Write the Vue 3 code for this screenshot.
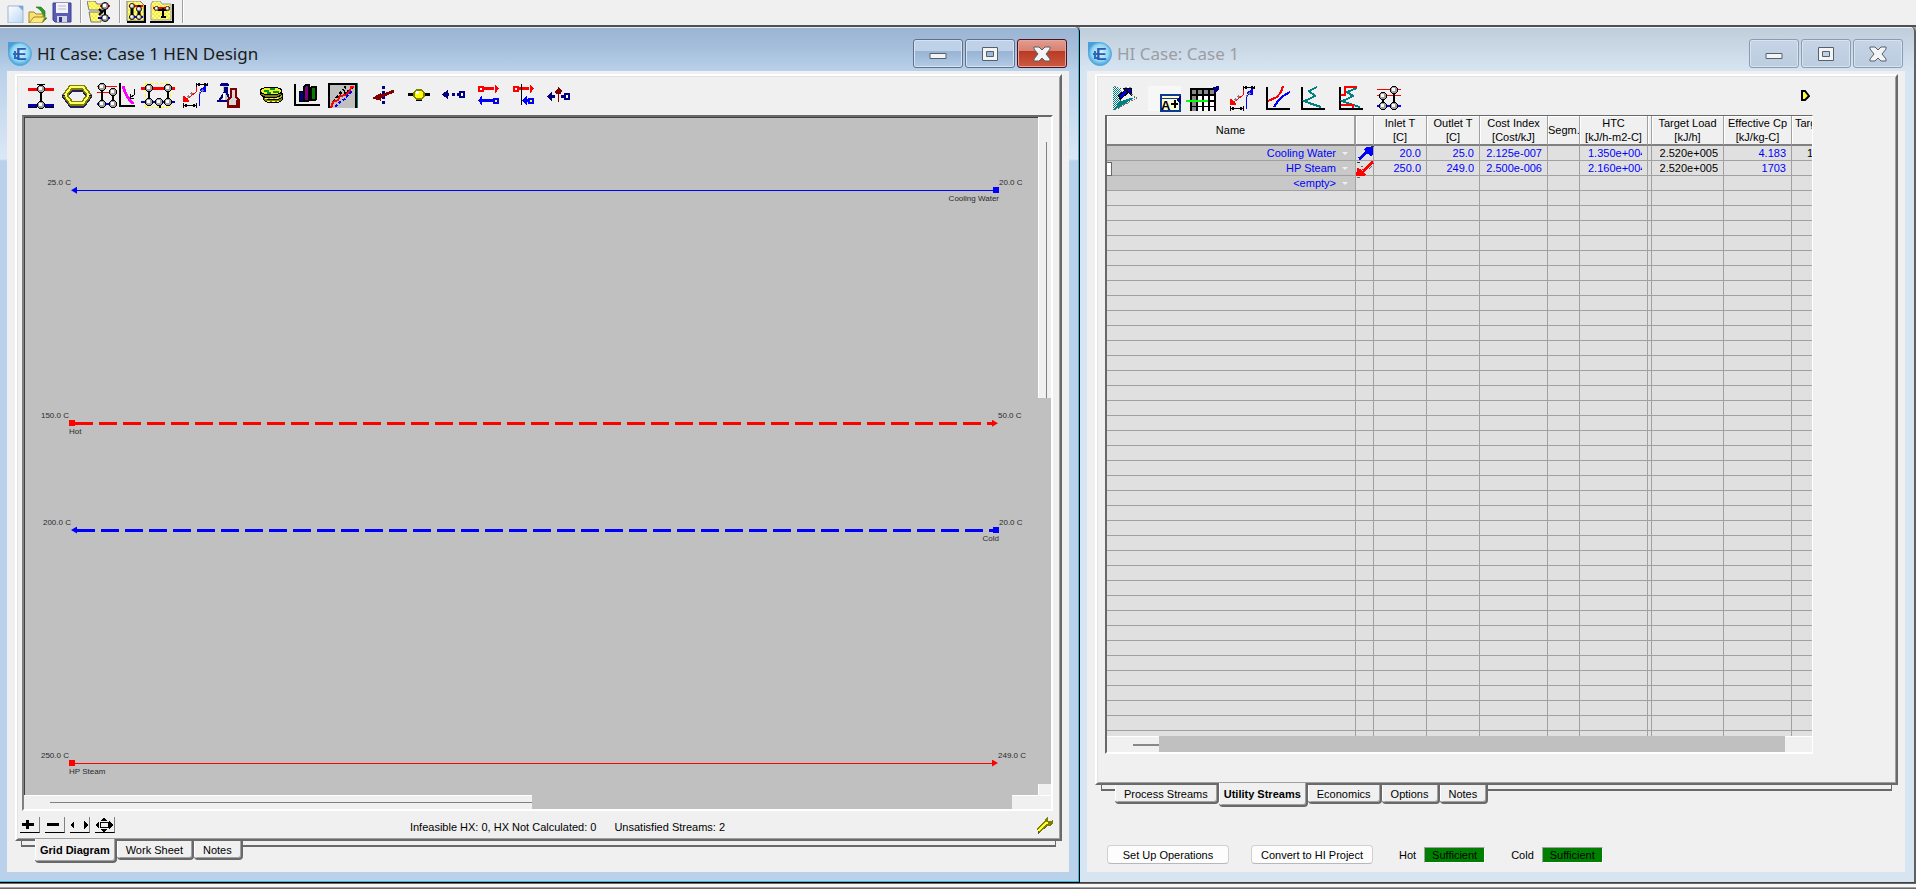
<template>
  <div class="workspace">
    <svg class="sprite" aria-hidden="true">
      <defs>
        <radialGradient id="logoFill" cx="50%" cy="45%" r="60%">
          <stop offset="0" stop-color="#e4f7ff" />
          <stop offset="0.6" stop-color="#8fd4f5" />
          <stop offset="1" stop-color="#2f8fd0" />
        </radialGradient>
        <linearGradient id="pageFill" x1="0" y1="0" x2="1" y2="1">
          <stop offset="0" stop-color="#ffffff" />
          <stop offset="1" stop-color="#b9d6f5" />
        </linearGradient>
        <pattern id="yellowDither" width="4" height="4" patternUnits="userSpaceOnUse">
          <path d="M0 0h4v4H0z" fill="#f8f020" />
          <path d="M0 0h2v2H0zM2 2h2v2H2z" fill="#fbf9a8" />
        </pattern>
        <pattern id="tealDither" width="2" height="2" patternUnits="userSpaceOnUse">
          <path d="M0 0h2v2H0z" fill="#008080" />
          <path d="M0 0h1v1H0zM1 1h1v1H1z" fill="#fff" />
        </pattern>
      </defs>

      <symbol id="ball" viewBox="0 0 8 8">
        <circle cx="4" cy="4" r="3.5" fill="#a0a0a0" stroke="#000" />
        <rect x="2" y="2" width="3" height="3" fill="#fff" />
      </symbol>
      <symbol id="logo" viewBox="0 0 24 24">
        <path d="M0 0h12v12H0z" fill="#4a9fd8" />
        <circle cx="12" cy="12" r="11.5" fill="url(#logoFill)" stroke="#58abdc" />
        <path d="M5 12h6M7 9v7h3" stroke="#2b6cc0" stroke-width="2" fill="none" />
      </symbol>

      <symbol id="new" viewBox="0 0 17 18">
        <path d="M1 1h15v17H1z" fill="url(#pageFill)" stroke="#9fb4cf" />
        <path d="M11 1l5 5v-5z" fill="#7ba6dc" />
      </symbol>
      <symbol id="open" viewBox="0 0 20 18">
        <path d="M8 2h5l4 4v7h2l-4 4-3-5h2V7l-3-3z" fill="#2c9a2c" stroke="#187018" stroke-width=".6" />
        <path d="M1 18V7h5l2 2h7v3" fill="#f4e27a" stroke="#a58718" />
        <path d="M1 18l5-6h11l-3 6z" fill="#ffe87c" stroke="#a58718" />
      </symbol>
      <symbol id="save" viewBox="0 0 20 21">
        <path d="M1 1h18v19H3l-2-2z" fill="#5a5cb4" stroke="#3c3f8c" />
        <path d="M4 1h12v10H4z" fill="#f3f3fb" />
        <path d="M6 4h8M6 7h8" stroke="#b8b8cc" />
        <path d="M5 14h10v6H5z" fill="#d5d5ea" />
        <path d="M7 15h3v5H7z" fill="#34367c" />
      </symbol>
      <symbol id="tree" viewBox="0 0 24 22">
        <path d="M0 0h8l2 3h5v6H2zM2 11h12v10H4z" fill="url(#yellowDither)" stroke="#777" />
        <path d="M13 5h10" stroke="#f00" stroke-width="2" />
        <path d="M11 17h12" stroke="#00f" stroke-width="2" />
        <path d="M18 4v14M12 14l5-5M12 8l4 4" stroke="#000" stroke-width="2" />
        <use href="#ball" x="14" y="1" width="8" height="8" />
        <use href="#ball" x="14" y="13" width="8" height="8" />
      </symbol>
      <symbol id="sheet" viewBox="0 0 20 22">
        <path d="M1 0h13l4 4v16H1z" fill="url(#yellowDither)" stroke="#777" />
        <path d="M3 5h14" stroke="#f00" stroke-width="2" />
        <path d="M3 16h14" stroke="#00f" stroke-width="2" />
        <path d="M6 4v13M13 4v13" stroke="#000" stroke-width="3" />
        <use href="#ball" x="3" y="2" width="6" height="6" />
        <use href="#ball" x="10" y="5" width="6" height="6" />
        <use href="#ball" x="3" y="13" width="6" height="6" />
        <use href="#ball" x="10" y="13" width="6" height="6" />
        <path d="M1 21h18V4" fill="none" stroke="#000" stroke-width="2" />
      </symbol>
      <symbol id="folder" viewBox="0 0 24 22">
        <path d="M1 3l2-3h7l2 3h9v16H1z" fill="url(#yellowDither)" stroke="#999" />
        <path d="M3 7h17" stroke="#f00" stroke-width="2" />
        <path d="M13 7v9M11 16h5M8 9h9" stroke="#000" stroke-width="2" />
        <use href="#ball" x="4" y="5" width="5" height="5" />
        <use href="#ball" x="15" y="5" width="5" height="5" />
        <path d="M0 21h23V3" fill="none" stroke="#000" stroke-width="2" />
      </symbol>

      <symbol id="exchanger" viewBox="0 0 26 26">
        <path d="M0 6h26" stroke="#f00" stroke-width="3" />
        <path d="M0 22h26" stroke="#0000b0" stroke-width="3" />
        <path d="M0 24.500h9M17 24.500h9M9 1.500h8" stroke="#000" />
        <path d="M13 2v20" stroke="#000" stroke-width="2" />
        <use href="#ball" x="9" y="2" width="8" height="8" />
        <use href="#ball" x="9" y="18" width="8" height="8" />
      </symbol>
      <symbol id="loop" viewBox="0 0 30 26">
        <path d="M3 14l6-8h12l6 8-6 8H9z" fill="none" stroke="#202060" stroke-width="5" />
        <path d="M3 12l6-8h12l6 8-6 8H9z" fill="none" stroke="#808000" stroke-width="5" />
        <path d="M3 12l6-8h12l6 8-6 8H9z" fill="none" stroke="#ffff60" stroke-width="2" />
        <path d="M0 12h3M27 12h3" stroke="#0000a0" />
      </symbol>
      <symbol id="pinch" viewBox="0 0 38 26">
        <path d="M0 3h20M0 9h20" stroke="#f00" />
        <path d="M0 21h20" stroke="#00f" stroke-width="2" />
        <path d="M5 3v18M16 9v12" stroke="#000" stroke-width="2" />
        <use href="#ball" x="1" y="0" width="8" height="8" />
        <use href="#ball" x="12" y="5" width="8" height="8" />
        <use href="#ball" x="1" y="17" width="8" height="8" />
        <use href="#ball" x="12" y="17" width="8" height="8" />
        <path d="M23 0v23h15" fill="none" stroke="#000" stroke-width="2" />
        <path d="M26 3l2 6 2 4 3 4 3 4" fill="none" stroke="#f0f" stroke-width="3" />
        <path d="M37 6v6l-4 3M33 11v4h4" fill="none" stroke="#000" />
      </symbol>
      <symbol id="network" viewBox="0 0 34 26">
        <path d="M4 .500h25v24H4z" fill="none" stroke="#ff0" stroke-dasharray="3 2" />
        <path d="M0 5h34" stroke="#f00" stroke-width="3" />
        <path d="M0 19h34" stroke="#0000c0" stroke-width="2" />
        <path d="M8 5v14M27 5v14M19 20v5" stroke="#000" stroke-width="2" />
        <use href="#ball" x="4" y="1" width="8" height="8" />
        <use href="#ball" x="23" y="1" width="8" height="8" />
        <use href="#ball" x="4" y="15" width="8" height="8" />
        <use href="#ball" x="14" y="15" width="8" height="8" />
        <use href="#ball" x="23" y="15" width="8" height="8" />
      </symbol>
      <symbol id="streams" viewBox="0 0 25 26">
        <path d="M13 1v8l-9 7" fill="none" stroke="#f00" />
        <path d="M9 10l-7 7" stroke="#808080" stroke-width="2" stroke-dasharray="2 2" />
        <path d="M0 19l1-6 5 5z" fill="#f00" stroke="#f00" />
        <path d="M16 23V11l5-5" fill="none" stroke="#00f" />
        <path d="M23 3l-1 6-5-2z" fill="#00f" stroke="#00f" />
        <path d="M16 11l5-5" stroke="#808080" stroke-width="2" stroke-dasharray="2 2" />
        <path d="M13 1.500h11M13 0v4M24 0v3M0 22.500h14M.500 20v5M13 20v5" stroke="#000" />
        <path d="M15 1.500h2M21 1.500h2M2 22.500h2M10 22.500h2" stroke="#000" stroke-width="3" />
      </symbol>
      <symbol id="flasks" viewBox="0 0 24 26">
        <path d="M6 1h5v8l3 9H1l5-9z" fill="#c8c8c8" />
        <path d="M3 2h9M4 1h7" stroke="#000080" stroke-width="2" />
        <path d="M8 4v5l-2 3-4 6M10 4v6l3 8M0 18h13" fill="none" stroke="#000080" stroke-width="2" />
        <path d="M7 10v7" stroke="#fff" stroke-width="2" />
        <path d="M14 6h5v8l3 3v7H11v-7l3-3z" fill="#d8d8d8" stroke="#800000" stroke-width="2" />
        <path d="M12 23h10M20 17v6" stroke="#800000" stroke-width="2" />
      </symbol>
      <symbol id="coins" viewBox="0 0 25 26">
        <ellipse cx="14" cy="15" rx="10" ry="5" fill="#808000" stroke="#000" />
        <ellipse cx="14" cy="12" rx="10" ry="5" fill="#b8b820" stroke="#000" />
        <ellipse cx="12" cy="10" rx="11" ry="5" fill="#808000" stroke="#000" />
        <ellipse cx="12" cy="8" rx="11" ry="4" fill="#f0f020" stroke="#000" />
        <path d="M5 8h5M11 6h5M14 9h6M8 10h4" stroke="#009030" stroke-width="2" />
        <path d="M6 15h14M8 18h12" stroke="#ffff60" stroke-dasharray="3 2" />
      </symbol>
      <symbol id="bars" viewBox="0 0 26 26">
        <path d="M1 1v21h25" fill="none" stroke="#000" stroke-width="2" />
        <path d="M5 8h5v10H5z" fill="#000080" stroke="#000" />
        <path d="M10 4l2-2h3v15l-1 1h-4z" fill="#800080" stroke="#000" stroke-width="2" />
        <path d="M17 5l1-1h4v12l-1 1h-4z" fill="#008000" stroke="#000" stroke-width="2" />
      </symbol>
      <symbol id="curves" viewBox="0 0 30 26">
        <path d="M0 0h30v25H0z" fill="#c0c0c0" />
        <path d="M1 25V.500h28" fill="none" stroke="#000" stroke-width="2" />
        <path d="M28 1v24" stroke="#000" stroke-width="2" />
        <path d="M29.500 0v25" stroke="#008080" />
        <path d="M5 19l5-6 5-6 5 2-5-8M11 10h8l5-5" fill="none" stroke="#000" stroke-width="2" stroke-dasharray="3 2" />
        <path d="M3 25l2-6 5-2 2-4 6-1 4-4 1-4h3" fill="none" stroke="#f00" stroke-width="2" />
        <path d="M7 24l5-5 5-3 4-5 4-4" fill="none" stroke="#00f" stroke-width="2" stroke-dasharray="3 2" />
      </symbol>
      <symbol id="split" viewBox="0 0 22 26">
        <path d="M10.500 3v19" stroke="#000080" stroke-width="3" stroke-dasharray="3 2" />
        <path d="M21 8L6 14" stroke="#800000" stroke-width="3" />
        <path d="M0 15l7-4v6z" fill="#800000" stroke="#800000" />
      </symbol>
      <symbol id="mixer" viewBox="0 0 22 26">
        <path d="M0 11.500h22" stroke="#000" stroke-width="3" />
        <path d="M8 17h6" stroke="#000" stroke-width="2" />
        <circle cx="11" cy="11.500" r="5" fill="#ffff00" stroke="#808000" stroke-width="2" />
        <path d="M8 8h3v3H8z" fill="#fff" />
      </symbol>
      <symbol id="dotted" viewBox="0 0 23 26">
        <path d="M0 11.500l6-5v10z" fill="#000080" />
        <path d="M4 11.500h3M10 11.500h3M15 11.500h2" stroke="#000080" stroke-width="3" />
        <path d="M18 9h4v5h-4z" fill="#fff" stroke="#000080" stroke-width="2" />
      </symbol>
      <symbol id="pair" viewBox="0 0 21 26">
        <path d="M6 5.500h10" stroke="#f00" stroke-width="3" />
        <path d="M1 4h4v4H1z" fill="#fff" stroke="#f00" stroke-width="2" />
        <path d="M21 5.500l-4-4v9z" fill="#f00" />
        <path d="M4 17.500h12" stroke="#00f" stroke-width="3" />
        <path d="M0 17.500l4-5v10z" fill="#00f" />
        <path d="M16 16h4v4h-4z" fill="#ff0" stroke="#00f" stroke-width="2" />
      </symbol>
      <symbol id="pairCut" viewBox="0 0 21 26">
        <path d="M6 5.500h10" stroke="#f00" stroke-width="3" />
        <path d="M1 4h4v4H1z" fill="#fff" stroke="#f00" stroke-width="2" />
        <path d="M21 5.500l-4-4v9z" fill="#f00" />
        <path d="M11 17.500h5" stroke="#00f" stroke-width="3" />
        <path d="M9 17.500l5-5v10z" fill="#00f" />
        <path d="M16 16h4v4h-4z" fill="#ff0" stroke="#00f" stroke-width="2" />
        <path d="M8.500 1v21" stroke="#000" />
      </symbol>
      <symbol id="insert" viewBox="0 0 23 26">
        <path d="M0 13.500l5-5v10z" fill="#000080" />
        <path d="M4 13.500h4M14 13.500h3" stroke="#000080" stroke-width="3" />
        <path d="M18 11h4v5h-4z" fill="#fff" stroke="#000080" stroke-width="2" />
        <path d="M11.500 4v15" stroke="#800000" />
        <path d="M12 5l3 3-1 3h-5L8 8z" fill="#800000" />
      </symbol>
      <symbol id="wrench" viewBox="0 0 17 17">
        <path d="M2 16l9-8 4-1 2-3" fill="none" stroke="#555" stroke-width="2" />
        <path d="M2 14l8-8" stroke="#808000" stroke-width="5" />
        <path d="M9 6V2l3-2v4h2l3-1v3l-3 3h-4z" fill="#808000" />
        <path d="M2 14l8-8 2 0" fill="none" stroke="#ffff30" stroke-width="2" />
      </symbol>

      <symbol id="utility" viewBox="0 0 24 26">
        <path d="M0 0l12 4-4 8-2 11-6 1z" fill="url(#tealDither)" />
        <path d="M1 24l5-8 8-3 9-2z" fill="#008080" />
        <path d="M1 0l4 2 4 4 3-5h6l1 7" fill="#fff" stroke="#888" stroke-dasharray="2 2" />
        <path d="M6 12l8-7" stroke="#000" stroke-width="5" />
        <path d="M7 11l7-6" stroke="#0000e0" stroke-width="3" />
        <path d="M10 2h8v7z" fill="#0000c0" stroke="#000" />
        <path d="M18 8l6 4-23 12" fill="none" stroke="#707070" stroke-dasharray="2 1" />
      </symbol>
      <symbol id="label" viewBox="0 0 33 26">
        <path d="M0 0h33v25H0z" fill="#f7f7f7" />
        <path d="M13 9h19v16H13z" fill="#fffbd2" stroke="#0a3c96" stroke-width="2" />
        <path d="M13 12h19" stroke="#0a3c96" />
        <path d="M28 14l5-4v8z" fill="#000080" />
        <path d="M23 18h7M26.500 14v8" stroke="#000" stroke-width="2" />
      </symbol>
      <symbol id="matrix" viewBox="0 0 33 26">
        <path d="M4 2h26v23H4z" fill="#000" />
        <path d="M6 6h23M6 12h23M6 18h23M6 23h23" stroke="#fff" stroke-width="4" stroke-dasharray="4 2" />
        <path d="M6 6h23M6 12h4M6 18h4M6 23h4" stroke="#888" stroke-width="4" stroke-dasharray="4 2" />
        <path d="M0 15h22" stroke="#0f0" stroke-width="2" />
        <path d="M27 1l6-1v4l-4 3z" fill="#000080" />
      </symbol>
      <symbol id="composite" viewBox="0 0 24 26">
        <path d="M1 1v22h23" fill="none" stroke="#000" stroke-width="2" />
        <path d="M2 15l9-4 4-5 2-6" fill="none" stroke="#f00" stroke-width="2" />
        <path d="M8 21l4-6 5-5 7-4" fill="none" stroke="#00f" stroke-width="2" />
      </symbol>
      <symbol id="grand" viewBox="0 0 24 26">
        <path d="M1 1v22h23" fill="none" stroke="#000" stroke-width="2" />
        <path d="M16 1l-8 4 6 5-6 3-5 2 8 3 9 3" fill="none" stroke="#008080" stroke-width="2" />
      </symbol>
      <symbol id="grandUtility" viewBox="0 0 24 26">
        <path d="M1 1v22h23" fill="none" stroke="#000" stroke-width="2" />
        <path d="M18 2L8 6l6 4-6 3-5 2 8 3 10 3" fill="none" stroke="#008080" stroke-width="2" />
        <path d="M18 1H6v8H2M2 19h12v3" fill="none" stroke="#f00" stroke-width="2" />
      </symbol>
      <symbol id="grid" viewBox="0 0 24 26">
        <path d="M0 3.500h24M0 9.500h24" stroke="#f00" />
        <path d="M0 20h24" stroke="#00f" stroke-width="2" />
        <path d="M6 9v12M17 4v17" stroke="#000" stroke-width="2" />
        <use href="#ball" x="2" y="6" width="8" height="8" />
        <use href="#ball" x="13" y="0" width="8" height="8" />
        <use href="#ball" x="2" y="16" width="8" height="8" />
        <use href="#ball" x="13" y="16" width="8" height="8" />
      </symbol>

      <symbol id="plus" viewBox="0 0 18 14"><path d="M2 6.500h12M7.500 2v9" stroke="#000" stroke-width="3" /></symbol>
      <symbol id="minus" viewBox="0 0 18 14"><path d="M2 6.500h12" stroke="#000" stroke-width="3" /></symbol>
      <symbol id="sides" viewBox="0 0 18 14"><path d="M0 7l4-4v8zM18 7l-4-4v8z" /></symbol>
      <symbol id="fit" viewBox="0 0 18 14">
        <path d="M0 7l4-4v8zM18 7l-4-4v8zM9 0l4 3H5zM9 14l4-3H5z" />
        <path d="M5 4.500h8v5H5z" fill="none" stroke="#000" />
      </symbol>
      <symbol id="min" viewBox="0 0 18 16"><path d="M1 7.500h16v5H1z" fill="#f4f4f4" stroke="#55606f" /></symbol>
      <symbol id="max" viewBox="0 0 18 16">
        <path d="M1.500 1.500h15v13h-15zM5.500 5.500h7v5h-7z" fill="#f4f4f4" fill-rule="evenodd" stroke="#55606f" />
      </symbol>
      <symbol id="close" viewBox="0 0 18 16">
        <path d="M1 1h5l3 3 3-3h5v2l-4 5 4 5v2h-5l-3-3-3 3H1v-2l4-5-4-5z" fill="#f4f4f4" stroke="#55606f" />
      </symbol>
    </svg>

    <header class="main-bar">
      <template v-for="item in mainTools" :key="item.icon">
        <span v-if="item.icon.startsWith('sep')" class="main-bar__sep"></span>
        <button v-else type="button" class="main-bar__tool" :aria-label="item.icon">
          <svg :width="item.w" :height="item.h"><use :href="'#' + item.icon" /></svg>
        </button>
      </template>
    </header>

    <main class="mdi">
      <section class="win win--active">
        <div class="win__title">
          <svg class="win__logo" width="24" height="24">
            <use href="#logo" />
            <text x="8" y="18">E</text>
          </svg>
          <h1 class="win__name">HI Case: Case 1 HEN Design</h1>
          <button v-for="b in windowButtons" :key="b" type="button" class="win__btn" :class="'win__btn--' + b" :aria-label="b">
            <svg width="18" height="16"><use :href="'#' + b" /></svg>
          </button>
        </div>

        <div class="win__body">
          <div class="sheet">
            <div class="tools">
              <div v-for="(group, g) in designTools" :key="g" class="tools__group" :class="'tools__group--' + g">
                <button
                  v-for="t in group"
                  :key="t.icon"
                  type="button"
                  class="tools__btn"
                  :class="{ 'tools__btn--wide': t.w > 30, 'tools__btn--narrow': g === 0 && t.w < 26 }"
                  :aria-label="t.icon"
                >
                  <svg class="tools__icon" :width="t.w" height="26"><use :href="'#' + t.icon" /></svg>
                </button>
              </div>
            </div>

            <div class="diagram">
              <div class="diagram__canvas">
                <div v-for="s in streams" :key="s.name" class="stream" :class="['stream--' + s.kind, { 'stream--process': s.process }]" :style="{ top: s.top + '%' }">
                  <span class="stream__temp">{{ s.left }}</span>
                  <span class="stream__mark stream__mark--left"></span>
                  <span class="stream__line"></span>
                  <span class="stream__mark stream__mark--right"></span>
                  <span class="stream__temp stream__temp--right">{{ s.right }}</span>
                  <span class="stream__name">{{ s.name }}</span>
                </div>
              </div>
              <div class="diagram__vbar">
                <span class="diagram__vthumb"></span>
                <span class="diagram__vend"></span>
              </div>
              <div class="diagram__hbar">
                <span class="diagram__hthumb"></span>
                <span class="diagram__hend"></span>
              </div>
            </div>

            <div class="status">
              <button v-for="z in zoomTools" :key="z" type="button" class="status__btn" :aria-label="z">
                <svg class="tools__icon" width="18" height="14"><use :href="'#' + z" /></svg>
              </button>
              <p class="status__text">
                <span>Infeasible HX: 0, HX Not Calculated: 0</span>
                <span>Unsatisfied Streams: 2</span>
              </p>
              <button type="button" class="status__wrench" aria-label="settings">
                <svg class="tools__icon" width="17" height="17"><use href="#wrench" /></svg>
              </button>
            </div>
          </div>

          <nav class="tabs">
            <button v-for="(tab, i) in designTabs" :key="tab" type="button" class="tabs__tab" :class="{ 'tabs__tab--on': i === 0 }">{{ tab }}</button>
          </nav>
        </div>
      </section>

      <section class="win">
        <div class="win__title">
          <svg class="win__logo" width="24" height="24">
            <use href="#logo" />
            <text x="8" y="18">E</text>
          </svg>
          <h1 class="win__name">HI Case: Case 1</h1>
          <button v-for="b in windowButtons" :key="b" type="button" class="win__btn" :class="'win__btn--' + b" :aria-label="b">
            <svg width="18" height="16"><use :href="'#' + b" /></svg>
          </button>
        </div>

        <div class="win__body">
          <div class="sheet sheet--case">
            <div class="tools tools--case">
              <button v-for="t in caseTools" :key="t.icon" type="button" class="tools__btn tools__btn--case" :class="'tools__btn--' + t.icon" :aria-label="t.icon">
                <svg class="tools__icon" :width="t.w" height="26">
                  <use :href="'#' + t.icon" />
                  <text v-if="t.icon === 'label'" x="13" y="24">A</text>
                </svg>
              </button>
              <button type="button" class="tools__more" aria-label="more">
                <svg width="9" height="12" viewBox="0 0 9 12">
                  <path d="M1 1h3l4 5-4 4H1z" fill="#ffff40" stroke="#000" stroke-width="2" />
                </svg>
              </button>
            </div>

            <div class="grid">
              <div class="grid__view">
                <table class="grid__table">
                  <colgroup>
                    <col v-for="(c, i) in columns" :key="i" :style="{ width: c.w + 'px' }" />
                  </colgroup>
                  <thead>
                    <tr>
                      <th v-for="(c, i) in columns" :key="i" :class="{ 'is-name': i === 0 }">
                        {{ c.label }}<template v-if="c.unit"><br />{{ c.unit }}</template>
                      </th>
                    </tr>
                  </thead>
                  <tbody>
                    <tr v-for="(row, r) in rows" :key="r">
                      <td class="cell-name" :class="{ 'cell-name--used': row.name, 'cell-name--current': r === 1 }">
                        <template v-if="row.name">
                          <select class="cell-name__select" aria-label="Utility name">
                            <option>{{ row.name }}</option>
                          </select>
                          <span class="cell-name__arrow"></span>
                        </template>
                      </td>
                      <td class="cell-kind">
                        <svg v-if="row.kind === 'cold'" class="cell-kind__icon" width="18" height="18" viewBox="0 0 18 18">
                          <path d="M3 14l8-7" stroke="#00f" stroke-width="3" />
                          <path d="M8 4l2-2h7v8l-3 1z" fill="#00f" />
                          <path d="M1 17h3M15 1h3M4 12l2-2" stroke="#333" />
                        </svg>
                        <svg v-if="row.kind === 'hot'" class="cell-kind__icon" width="18" height="18" viewBox="0 0 18 18">
                          <path d="M17 2L7 11" stroke="#f00" stroke-width="3" />
                          <path d="M0 16l1-8 3 1 6 5-2 2z" fill="#f00" />
                          <path d="M5 7l2-1M13 9l3-3M1 17h3" stroke="#666" />
                        </svg>
                      </td>
                      <td v-for="(v, i) in row.values" :key="i" :class="{ 'is-calc': i === 6, 'is-htc': i === 4 }">
                        <span class="cell-value">{{ v }}</span>
                      </td>
                    </tr>
                  </tbody>
                </table>
              </div>
              <div class="grid__hbar">
                <span class="grid__thumb"></span>
                <span class="grid__end"></span>
              </div>
            </div>
          </div>

          <nav class="tabs">
            <button v-for="(tab, i) in caseTabs" :key="tab" type="button" class="tabs__tab" :class="{ 'tabs__tab--on': i === 1 }">{{ tab }}</button>
          </nav>

          <footer class="actions">
            <button type="button" class="actions__btn">Set Up Operations</button>
            <button type="button" class="actions__btn">Convert to HI Project</button>
            <div v-for="label in ['Hot', 'Cold']" :key="label" class="actions__state">
              <span>{{ label }}</span>
              <output class="actions__badge">Sufficient</output>
            </div>
          </footer>
        </div>
      </section>
    </main>

    <div class="dock"></div>
  </div>
</template>

<script setup>
const mainTools = [
  { icon: 'new', w: 17, h: 18 },
  { icon: 'open', w: 20, h: 18 },
  { icon: 'save', w: 20, h: 21 },
  { icon: 'sep1' },
  { icon: 'tree', w: 24, h: 22 },
  { icon: 'sep2' },
  { icon: 'sheet', w: 20, h: 22 },
  { icon: 'folder', w: 24, h: 22 },
  { icon: 'sep3' },
]

const windowButtons = ['min', 'max', 'close']
const zoomTools = ['plus', 'minus', 'sides', 'fit']

const designTools = [
  [
    { icon: 'exchanger', w: 26 },
    { icon: 'loop', w: 30 },
    { icon: 'pinch', w: 38 },
    { icon: 'network', w: 34 },
    { icon: 'streams', w: 25 },
    { icon: 'flasks', w: 24 },
  ],
  [
    { icon: 'coins', w: 25 },
    { icon: 'bars', w: 26 },
    { icon: 'curves', w: 30 },
  ],
  [
    { icon: 'split', w: 22 },
    { icon: 'mixer', w: 22 },
    { icon: 'dotted', w: 23 },
    { icon: 'pair', w: 21 },
    { icon: 'pairCut', w: 21 },
    { icon: 'insert', w: 23 },
  ],
]

const caseTools = [
  { icon: 'utility', w: 24 },
  { icon: 'label', w: 33 },
  { icon: 'matrix', w: 33 },
  { icon: 'streams', w: 25 },
  { icon: 'composite', w: 24 },
  { icon: 'grand', w: 24 },
  { icon: 'grandUtility', w: 24 },
  { icon: 'grid', w: 24 },
]

const designTabs = ['Grid Diagram', 'Work Sheet', 'Notes']
const caseTabs = ['Process Streams', 'Utility Streams', 'Economics', 'Options', 'Notes']

// top is the share of the canvas height
const streams = [
  { name: 'Cooling Water', kind: 'cold', process: false, left: '25.0 C', right: '20.0 C', top: 10.6 },
  { name: 'Hot', kind: 'hot', process: true, left: '150.0 C', right: '50.0 C', top: 45 },
  { name: 'Cold', kind: 'cold', process: true, left: '200.0 C', right: '20.0 C', top: 60.8 },
  { name: 'HP Steam', kind: 'hot', process: false, left: '250.0 C', right: '249.0 C', top: 95.2 },
]

const columns = [
  { label: 'Name', w: 249 },
  { label: '', w: 18 },
  { label: 'Inlet T', unit: '[C]', w: 53 },
  { label: 'Outlet T', unit: '[C]', w: 53 },
  { label: 'Cost Index', unit: '[Cost/kJ]', w: 68 },
  { label: 'Segm.', w: 32 },
  { label: 'HTC', unit: '[kJ/h-m2-C]', w: 68 },
  { label: '', w: 4 },
  { label: 'Target Load', unit: '[kJ/h]', w: 72 },
  { label: 'Effective Cp', unit: '[kJ/kg-C]', w: 68 },
  { label: 'Target', w: 38 },
]

const blank = Array(9).fill('')
const rows = [
  { name: 'Cooling Water', kind: 'cold', values: ['20.0', '25.0', '2.125e-007', '', '1.350e+004', '', '2.520e+005', '4.183', '1.000'] },
  { name: 'HP Steam', kind: 'hot', values: ['250.0', '249.0', '2.500e-006', '', '2.160e+004', '', '2.520e+005', '1703', ''] },
  { name: '<empty>', values: blank },
  ...Array.from({ length: 37 }, () => ({ values: blank })),
]
</script>

<style>
body {
  background: #fff;
  margin: 0;
}
</style>

<style scoped>
.workspace {
  background: #f0f0f0;
  color: #000;
  display: flex;
  flex-direction: column;
  font-family: "Liberation Sans", Arial, sans-serif;
  font-size: 11px;
  height: 100vh;
  line-height: 14px;
  overflow: hidden;
}

.workspace * {
  box-sizing: border-box;
}

.sprite {
  height: 0;
  position: absolute;
  width: 0;
}

svg {
  display: block;
  flex: none;
}

button {
  background: none;
  border: 0;
  color: inherit;
  font: inherit;
  padding: 0;
}

.main-bar {
  align-items: flex-end;
  border-bottom: 2px solid #505050;
  display: flex;
  flex: none;
  gap: 4px;
  height: 27px;
  padding: 0 7px 2px;
}

.main-bar__sep {
  border-left: 1px solid #a0a0a0;
  border-right: 1px solid #fff;
  height: 23px;
  margin: 0 1px 0 4px;
}

.mdi {
  background: #ababab;
  display: grid;
  flex: 1;
  grid-template-columns: 1080fr 836fr;
  min-height: 0;
}

.win {
  background: linear-gradient(#bfcddb, #d7e4f2 44px);
  border-bottom: 1px solid #404040;
  border-radius: 0 5px 0 0;
  border-right: 2px solid #606060;
  box-shadow: inset 0 1px #eef4fa;
  display: flex;
  flex-direction: column;
  min-height: 0;
  min-width: 0;
  padding: 0 9px 10px 7px;
}

.win--active {
  background: linear-gradient(#9ab4d1, #a7c0dc 24px, #b9d1ea 44px, #dbe8f6 132px, #b9d1ea 134px);
  border-color: #000;
  border-right-width: 1px;
  box-shadow: inset -1px -1px #2fc0dd, inset 0 1px #e4eef8;
  padding-right: 10px;
}

.win__title {
  align-items: center;
  color: #9a9ea3;
  display: flex;
  flex: none;
  gap: 2px;
  height: 44px;
  padding: 9px 2px 0 1px;
}

.win--active .win__title {
  color: #1a1a1a;
}

.win__logo text {
  fill: #2b5cb0;
  font-size: 16px;
  font-weight: 700;
}

.win__name {
  flex: 1;
  font-family: "Noto Sans", "Open Sans", sans-serif;
  font-size: 17px;
  font-weight: 400;
  line-height: 24px;
  margin: 0 0 0 3px;
  white-space: nowrap;
}

.win__btn {
  align-items: center;
  align-self: flex-start;
  background: linear-gradient(#c5d4e6, #bccde0);
  border: 1px solid #8a9bb4;
  border-radius: 3px;
  box-shadow: inset 0 0 0 1px #d8e3f0;
  display: flex;
  height: 29px;
  justify-content: center;
  margin-top: 3px;
  width: 50px;
}

.win--active .win__btn {
  background: linear-gradient(#bed1e8 42%, #98b4d3 42%, #b2cbe6);
  border-color: #5f708f;
}

.win--active .win__btn--close {
  background: linear-gradient(#e29c90 0, #d77f70 42%, #b93a25 42%, #cb5a40);
  border-color: #4c1020;
  box-shadow: inset 0 0 0 1px #e6a79b;
}

.win__body {
  background: #f0f0f0;
  display: flex;
  flex: 1;
  flex-direction: column;
  min-height: 0;
  padding: 3px 7px 0 8px;
}

.sheet {
  border: solid;
  border-color: #fff #696969 #696969 #fff;
  border-width: 2px;
  box-shadow: inset 1px 1px #e3e3e3, inset -1px -1px #a0a0a0;
  display: flex;
  flex: 1;
  flex-direction: column;
  margin-bottom: 31px;
  min-height: 0;
  padding: 0 7px 0 5px;
}

.sheet--case {
  flex: 0 1 711px;
  margin-bottom: 0;
  padding-left: 8px;
}

.tools {
  display: flex;
  flex: none;
  gap: 5px;
  height: 39px;
  padding: 7px 0 0 1px;
}

.tools__icon {
  shape-rendering: crispEdges;
}

.tools__icon text {
  font-size: 13px;
  font-weight: 700;
}

.tools__group {
  display: flex;
}

.tools__group--1 {
  margin-left: 3px;
}

.tools__btn {
  display: flex;
  height: 26px;
  justify-content: center;
  width: 36px;
}

.tools__btn--wide {
  width: 42px;
}

.tools__btn--narrow {
  width: 33px;
}

.tools__group--2 .tools__btn {
  width: 35px;
}

.tools--case {
  gap: 11px;
  padding: 10px 79px 0 8px;
}

.tools__btn--case {
  width: auto;
}

.tools__btn--matrix {
  margin-left: -6px;
}

.tools__btn--grandUtility,
.tools__btn--grid {
  margin-left: 3px;
}

.tools__more {
  height: 12px;
  margin: 4px 0 0 auto;
}

.diagram {
  background: #c0c0c0;
  border: 2px solid;
  border-color: #696969 #fff #fff #808080;
  display: grid;
  flex: 1;
  grid-template-columns: 1fr 13px;
  grid-template-rows: 1fr 14px;
  min-height: 0;
}

.diagram__canvas {
  border: solid #404040;
  border-width: 1px 0 0 1px;
  position: relative;
}

.diagram__vbar {
  align-items: stretch;
  display: flex;
  flex-direction: column;
  justify-content: space-between;
}

.diagram__vthumb {
  background: linear-gradient(#808080, #808080) 7px 25px / 1px 100% no-repeat #f0f0f0;
  border-left: 1px solid #fff;
  height: 41.5%;
}

.diagram__vend {
  background: #f0f0f0;
  border-left: 1px solid #fff;
  height: 11px;
}

.diagram__hbar {
  display: flex;
  grid-column: 1 / -1;
  justify-content: space-between;
}

.diagram__hthumb {
  background: linear-gradient(#808080, #808080) 26px 6px / 100% 1px no-repeat #f0f0f0;
  border-top: 1px solid #fff;
  width: 49.5%;
}

.diagram__hend {
  background: #f0f0f0;
  border-top: 1px solid #fff;
  width: 39px;
}

.stream {
  align-items: center;
  display: flex;
  font-size: 8px;
  height: 7px;
  left: 46px;
  line-height: 9px;
  margin-top: -3px;
  position: absolute;
  right: 39px;
}

.stream--hot {
  color: #f00;
  left: 44px;
  right: 40px;
}

.stream--cold {
  color: #00f;
}

.stream__line {
  background: currentColor;
  flex: 1;
  height: 1px;
}

.stream--process .stream__line {
  background: repeating-linear-gradient(90deg, currentColor 0 18px, transparent 18px 24px);
  height: 3px;
}

.stream__mark {
  background: currentColor;
  height: 6px;
  width: 6px;
}

.stream--cold .stream__mark--left {
  clip-path: polygon(0 50%, 100% 0, 100% 100%);
  height: 7px;
}

.stream--hot .stream__mark--right {
  clip-path: polygon(0 0, 100% 50%, 0 100%);
  height: 7px;
}

.stream__temp,
.stream__name {
  color: #2b2b2b;
  position: absolute;
  white-space: nowrap;
}

.stream__temp {
  bottom: 7px;
  right: 100%;
}

.stream__temp--right {
  left: 100%;
  right: auto;
}

.stream__name {
  top: 7px;
}

.stream--cold .stream__name {
  right: 0;
}

.status {
  align-items: center;
  display: flex;
  flex: none;
  gap: 5px;
  height: 28px;
  margin-left: -2px;
}

.status__btn {
  border: solid;
  border-color: transparent #808080 #000 transparent;
  border-width: 0 1px 1px 0;
  height: 16px;
  width: 20px;
}

.status__text {
  display: flex;
  flex: 1;
  gap: 18px;
  justify-content: center;
  margin: 0;
  padding: 3px 16px 0 0;
}

.tabs {
  display: flex;
  flex: none;
  height: 24px;
  margin: -2px 0 0;
  padding-left: 20px;
  position: relative;
}

.sheet:not(.sheet--case) + .tabs {
  margin: -33px 0 9px;
}

.tabs::before {
  border: solid #696969;
  border-width: 0 1px 2px;
  content: "";
  height: 4px;
  left: 6px;
  position: absolute;
  right: 6px;
  top: 2px;
}

.tabs__tab {
  background: #f0f0f0;
  border: solid #696969;
  border-radius: 0 0 4px 4px;
  border-width: 0 2px 2px 0;
  box-shadow: inset 1px 0 #fff, inset -1px -1px #a0a0a0;
  height: 19px;
  margin-top: 2px;
  padding: 0 9px;
  position: relative;
}

.tabs__tab--on {
  font-weight: 700;
  height: 24px;
  margin-top: 0;
  padding: 0 5px;
}

.grid {
  border: solid;
  border-color: #696969 #fff #fff #696969;
  border-width: 1px 1px 2px 2px;
  display: flex;
  flex-direction: column;
  height: 639px;
  max-width: 708px;
}

.grid__view {
  background: #e0e0e0;
  flex: 1;
  min-height: 0;
  overflow: hidden;
}

.grid__table {
  border-collapse: separate;
  border-spacing: 0;
  table-layout: fixed;
  width: 723px;
}

.grid__table th {
  background: #f0f0f0;
  border-bottom: 2px solid #808080;
  border-right: 1px solid #a0a0a0;
  box-shadow: inset 1px 1px #fff;
  font-weight: 400;
  height: 30px;
  overflow: hidden;
  padding: 0;
  white-space: nowrap;
}

.grid__table th.is-name {
  border-right: 2px solid #a0a0a0;
}

.grid__table th:last-child {
  padding-left: 3px;
  text-align: left;
  vertical-align: top;
}

.grid__table td {
  background: #e0e0e0;
  border-bottom: 1px solid #a0a0a0;
  border-right: 1px solid #a0a0a0;
  color: #00f;
  height: 15px;
  line-height: 14px;
  padding: 0 5px;
  position: relative;
  text-align: right;
}

.grid__table td.is-calc,
.grid__table td:last-child {
  color: #000;
}

.grid__table td:last-child {
  padding-left: 15px;
}

.grid__table td.is-htc {
  padding-left: 8px;
}

.grid__table td:nth-child(8),
.grid__table td.cell-name {
  padding: 0;
}

.grid__table td.cell-name--used {
  background: #c8c8c8;
}

.cell-name--current::before {
  background: #fff;
  border: 1px solid #696969;
  border-left: 0;
  content: "";
  height: 12px;
  left: 0;
  position: absolute;
  top: 1px;
  width: 4px;
}

.cell-name__select {
  appearance: none;
  background: none;
  border: 0;
  color: inherit;
  display: block;
  font: inherit;
  height: 14px;
  line-height: 14px;
  padding: 0 19px 0 0;
  text-align: right;
  text-align-last: right;
  width: 100%;
}

.cell-name__arrow {
  border: 3px solid transparent;
  border-bottom: 0;
  border-top-color: #f0f0f0;
  pointer-events: none;
  position: absolute;
  right: 7px;
  top: 6px;
}

.cell-kind__icon {
  left: 0;
  position: absolute;
  shape-rendering: crispEdges;
  top: -1px;
  z-index: 1;
}

.cell-value {
  display: flow-root;
  height: 14px;
  margin-left: auto;
  max-width: 100%;
  overflow: hidden;
  text-align: left;
  width: fit-content;
}

.grid__hbar {
  background: #c0c0c0;
  display: flex;
  flex: none;
  height: 16px;
  justify-content: space-between;
}

.grid__thumb {
  background: linear-gradient(#888, #888) 26px 7px / 26px 2px no-repeat #f0f0f0;
  border-top: 1px solid #fff;
  width: 52px;
}

.grid__end {
  background: #f0f0f0;
  border-top: 1px solid #fff;
  width: 27px;
}

.actions {
  align-items: center;
  display: flex;
  gap: 22px;
  margin-top: 38px;
  padding-left: 12px;
}

.actions__btn {
  background: #fdfdfd;
  border: 1px solid #d0d0d0;
  border-bottom-color: #b8b8b8;
  border-radius: 4px;
  height: 19px;
  width: 122px;
}

.actions__state {
  align-items: center;
  display: flex;
  gap: 8px;
  padding-left: 4px;
}

.actions__badge {
  background: #008000;
  border: 1px solid;
  border-color: #a0a0a0 #fff #fff #a0a0a0;
  height: 16px;
  text-align: center;
  width: 61px;
}

.dock {
  background: linear-gradient(#696969 1px, #f8f8f8 1px 4px, #a0a0a0 4px 5px, #696969 5px 6px, #fff 6px);
  flex: none;
  height: 8px;
}
</style>
